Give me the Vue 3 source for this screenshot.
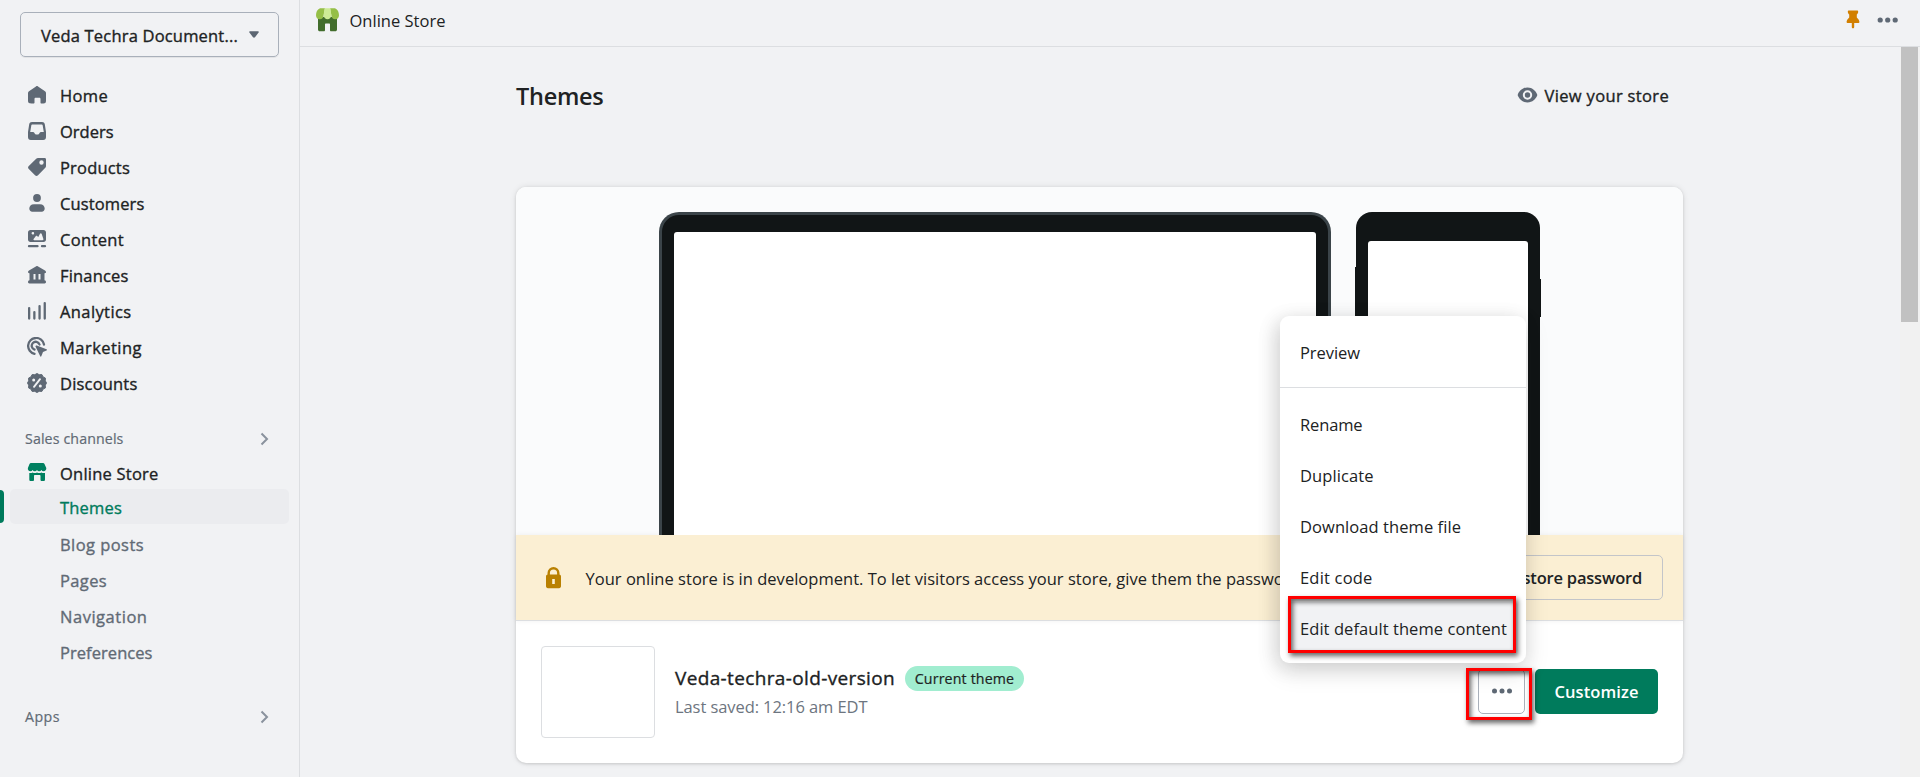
<script setup>
const nav = [
  { label: 'Home', icon: 'home', w: 47 },
  { label: 'Orders', icon: 'orders', w: 52.5 },
  { label: 'Products', icon: 'products', w: 69 },
  { label: 'Customers', icon: 'customers', w: 83.5 },
  { label: 'Content', icon: 'content', w: 63 },
  { label: 'Finances', icon: 'finances', w: 67.5 },
  { label: 'Analytics', icon: 'analytics', w: 70.5 },
  { label: 'Marketing', icon: 'marketing', w: 81 },
  { label: 'Discounts', icon: 'discounts', w: 76.5 },
]
const sub = [
  { label: 'Blog posts', w: 83 },
  { label: 'Pages', w: 46 },
  { label: 'Navigation', w: 86.5 },
  { label: 'Preferences', w: 91.5 },
]
const actions = [
  { label: 'Rename', w: 61.5 },
  { label: 'Duplicate', w: 72.5 },
  { label: 'Download theme file', w: 160 },
  { label: 'Edit code', w: 71.5 },
  { label: 'Edit default theme content', w: 206, active: true },
]

// Tracks a label so that it fills the given width.
const vFit = {
  mounted(el, { value }) {
    const extra = value + 1 - el.getBoundingClientRect().width
    el.style.letterSpacing = `${extra / el.textContent.trim().length}px`
  },
}
</script>

<template>
  <div class="app">
    <aside class="sidebar">
      <div class="picker">
        <span v-fit="196">Veda Techra Document...</span>
        <svg width="10" height="7" viewBox="0 0 10 7"><path d="M1 .3h8c.8 0 1.100.7.6 1.200L6 6.200c-.6.6-1.400.6-2 0L.4 1.500C-.1 1 .2.300 1 .3z" fill="#5c6672" /></svg>
      </div>

      <nav class="primary">
        <a v-for="n in nav" :key="n.label" class="row">
          <svg class="ico" viewBox="0 0 20 20" width="20" height="20" fill="#5f6975">
            <path v-if="n.icon === 'home'" d="M9 1.400c.6-.4 1.400-.4 2 0l7 4.900c.6.400 1 1 1 1.700V16c0 1.700-1 2.500-2.500 2.500h-2c-.7 0-1-.4-1-1V14c0-.8-.5-1.300-1.200-1.300H8.700c-.8 0-1.200.5-1.200 1.300v3.500c0 .6-.4 1-1 1h-2C2 18.500 1 17.700 1 16V8c0-.7.4-1.300 1-1.700z" />
            <path v-else-if="n.icon === 'orders'" fill-rule="evenodd" d="M5 1h10c1.500 0 2.500.8 2.800 2.200L19 11v5c0 1.800-1 3-2.800 3H3.800C2 19 1 17.800 1 16v-5l1.200-7.800C2.500 1.800 3.500 1 5 1zm.6 2.500c-.8 0-1.200.4-1.300 1L3.200 11H6c.6 0 1 .2 1.300.7L8 13c.2.300.5.500 1 .5h2c.5 0 .8-.2 1-.5l.7-1.300c.3-.5.7-.7 1.300-.7h2.800l-1.100-6.500c-.1-.6-.5-1-1.300-1z" />
            <path v-else-if="n.icon === 'products'" fill-rule="evenodd" d="M11 1h6.500c1 0 1.500.5 1.500 1.500V9c0 .7-.2 1.300-.7 1.800l-7.300 7.400c-1 1-2 1-3 0L1.800 12c-1-1-1-2 0-3l7.400-7.300C9.700 1.200 10.300 1 11 1zm3.500 6.700a2.200 2.200 0 1 0 0-4.400 2.200 2.200 0 0 0 0 4.400z" />
            <g v-else-if="n.icon === 'customers'"><circle cx="10" cy="5" r="3.900" /><path d="M7 11.200h6c3 0 4.700 2 4.700 4.300 0 2-1.200 3.200-3 3.200H5.300c-1.800 0-3-1.200-3-3.200 0-2.300 1.700-4.300 4.700-4.300z" /></g>
            <g v-else-if="n.icon === 'content'"><path fill-rule="evenodd" d="M3.500 1h13C18 1 19 2 19 3.500v7c0 1.500-1 2.500-2.500 2.500h-13C2 13 1 12 1 10.500v-7C1 2 2 1 3.500 1zM5.500 5.500A1.300 1.300 0 1 0 5.500 3a1.300 1.300 0 0 0 0 2.500zM7.300 11.200h8.200c.8 0 1.100-.6.9-1.200l-1.700-5c-.3-.9-1.200-.9-1.700-.2L11.300 8 10 7c-.5-.3-1-.2-1.300.3L6.600 10c-.4.600-.1 1.200.7 1.200z" /><path d="M2 16h8.500a1.100 1.100 0 0 1 0 2.300H2A1.100 1.100 0 0 1 2 16zm13 0h3a1.100 1.100 0 0 1 0 2.300h-3a1.100 1.100 0 0 1 0-2.300z" /></g>
            <path v-else-if="n.icon === 'finances'" fill-rule="evenodd" d="M9.300 1.200c.5-.3.900-.3 1.400 0L18 5.400c.7.400 1 .9 1 1.600 0 .8-.5 1.200-1.200 1.200H17.500v7c1 .2 1.500.8 1.500 1.800 0 .9-.5 1.400-1.400 1.400H2.400C1.500 18.400 1 17.900 1 17c0-1 .5-1.600 1.500-1.800v-7h-.3C1.500 8.200 1 7.800 1 7c0-.7.300-1.200 1-1.600zM6.500 9v5.500h2V9zm5 0v5.500h2V9z" />
            <g v-else-if="n.icon === 'analytics'"><rect x="1" y="6" width="2.300" height="12.700" rx="1.100" /><rect x="6.200" y="10" width="2.300" height="8.700" rx="1.100" /><rect x="11.400" y="4" width="2.300" height="14.700" rx="1.100" /><rect x="16.600" y="1" width="2.300" height="17.700" rx="1.100" /></g>
            <g v-else-if="n.icon === 'marketing'"><path fill="none" stroke="#5f6975" stroke-width="2.300" stroke-linecap="round" d="M17 7.500A8 8 0 1 0 7.500 16.800M12.500 7.500A4 4 0 1 0 7.500 12.600" /><path d="M8.800 8.800c.3-.3.600-.3 1-.2l9.700 3.600c.7.300.7 1 0 1.300l-3.500 1.600-1.600 4c-.3.700-1 .7-1.300 0L8.600 9.800c-.2-.4-.1-.7.200-1z" /></g>
            <g v-else><path d="M10 .5l2.200 1.200 2.700-.1 1.200 2.300 2.300 1.200-.1 2.700L19.500 10l-1.200 2.200.1 2.700-2.300 1.200-1.200 2.300-2.700-.1L10 19.500l-2.200-1.200-2.700.1-1.200-2.300-2.300-1.200.1-2.700L.5 10l1.200-2.200-.1-2.700 2.300-1.200 1.200-2.300 2.700.1z" stroke="#5f6975" stroke-linejoin="round" /><path d="M7 13.800l6-7.600" stroke="#f1f2f4" stroke-width="1.900" stroke-linecap="round" /><circle cx="6.700" cy="7" r="1.500" fill="#f1f2f4" /><circle cx="13.300" cy="13" r="1.500" fill="#f1f2f4" /></g>
          </svg>
          <span v-fit="n.w">{{ n.label }}</span>
        </a>
      </nav>

      <div class="section">
        <span v-fit="97.500">Sales channels</span>
        <svg width="9" height="14" viewBox="0 0 9 14"><path d="M1.500 1.500L7 7l-5.500 5.500" fill="none" stroke="#8a929d" stroke-width="2" /></svg>
      </div>
      <div class="row channel">
        <svg class="ico" viewBox="0 0 20 20" width="20" height="20" fill="#008060"><path d="M4 1h12c.7 0 1.200.3 1.500.9L19.300 6c.2 2-1 3.200-2.700 3.200-1 0-1.700-.4-2.200-1.200-.5.800-1.200 1.200-2.200 1.200S10.500 8.800 10 8c-.5.800-1.200 1.200-2.200 1.200S6.100 8.800 5.600 8c-.5.800-1.200 1.200-2.200 1.200C1.700 9.200.5 8 .9 6l1.600-4.100C2.800 1.300 3.300 1 4 1z" /><path d="M2.300 11c1.500.3 2.500 0 3.300-.6 1.300.9 3 .9 4.400 0 1.400.9 3.100.9 4.400 0 .8.600 2 .9 3.600.6v6.500c0 1-.6 1.500-1.500 1.500h-1.700c-.9 0-1.300-.5-1.300-1.300V14c0-.7-.3-1-1-1H8c-.7 0-1 .3-1 1v3.700c0 .8-.4 1.300-1.300 1.300H3.800c-.9 0-1.500-.5-1.500-1.500z" /></svg>
        <span v-fit="97.500">Online Store</span>
      </div>
      <div class="current"><i /><div><span v-fit="61">Themes</span></div></div>
      <div class="subnav">
        <a v-for="s in sub" :key="s.label"><span v-fit="s.w">{{ s.label }}</span></a>
      </div>
      <div class="section apps">
        <span v-fit="34">Apps</span>
        <svg width="9" height="14" viewBox="0 0 9 14"><path d="M1.500 1.500L7 7l-5.500 5.500" fill="none" stroke="#8a929d" stroke-width="2" /></svg>
      </div>
    </aside>

    <main>
      <header class="topbar">
        <svg width="23" height="24" viewBox="0 0 23 24"><path d="M2 9h19v12.500c0 1.200-.7 1.800-1.800 1.800h-4c-.9 0-1.200-.5-1.200-1.300v-5.500c0-.7-.3-1-1-1H10c-.7 0-1 .3-1 1V22c0 .8-.3 1.300-1.200 1.300h-4C2.700 23.300 2 22.700 2 21.500z" fill="#426d2c" /><path d="M4 .3h5L7.700 7c0 2.500-1.500 4.300-3.900 4.300S0 9.500 0 7.200C.2 4 1 1.900 4 .3zM14 .3h5c3 1.600 3.800 3.700 4 6.900 0 2.300-1.400 4.100-3.800 4.100S15.300 9.500 15.300 7z" fill="#95bf47" /><path d="M8.600.3h5.800l.9 6.700c0 2.500-1.600 4.300-3.800 4.300S7.700 9.500 7.700 7z" fill="#cdeb95" /></svg>
        <span class="title"><span v-fit="95">Online Store</span></span>
        <svg class="pin" width="14" height="19" viewBox="0 0 14 19"><path d="M3 .5h8c.8 0 1.200.5 1.200 1.200 0 1.300-.6 2-1.400 2.800v3C12.500 9 13.400 10.500 13.400 12c0 .6-.3.900-.9.900H8.200V17c0 .8-.4 1.300-1.200 1.300s-1.200-.5-1.200-1.300v-4.100H1.500c-.6 0-.9-.3-.9-.9C.6 10.500 1.500 9 3.200 7.500v-3C2.400 3.700 1.800 3 1.800 1.700 1.800 1 2.200.5 3 .5z" fill="#d27f00" /></svg>
        <svg width="22" height="6" viewBox="0 0 22 6" fill="#5f6975"><circle cx="3.200" cy="3" r="2.600" /><circle cx="10.700" cy="3" r="2.600" /><circle cx="18.200" cy="3" r="2.600" /></svg>
      </header>

      <div class="scroller">
        <div class="content">
          <div class="pagehead">
            <h1><span v-fit="86.500">Themes</span></h1>
            <a class="view">
              <svg width="21" height="16" viewBox="0 0 21 16"><path fill-rule="evenodd" d="M10.500.5c5 0 8.300 3.600 9.600 6.700.2.500.2 1.100 0 1.600-1.300 3.100-4.600 6.700-9.600 6.700S2.200 11.900.9 8.800a2 2 0 0 1 0-1.600C2.200 4.100 5.500.5 10.500.5zm0 12.200a4.700 4.700 0 1 0 0-9.400 4.700 4.700 0 0 0 0 9.400zm0-2a2.700 2.700 0 1 0 0-5.400 2.700 2.700 0 0 0 0 5.400z" fill="#5f6975" /></svg>
              <span v-fit="123.500">View your store</span>
            </a>
          </div>

          <section class="card">
            <div class="stage">
              <div class="laptop"><div /></div>
              <div class="phone"><div /><i class="lbtn" /><i class="rbtn" /></div>
            </div>
            <div class="banner">
              <svg width="15" height="22" viewBox="0 0 15 22"><path fill="none" stroke="#b98000" stroke-width="2.400" d="M2.700 9V6a4.800 4.800 0 0 1 9.600 0v3" /><path fill-rule="evenodd" d="M2 7.500h11c1.300 0 2 .7 2 2V19c0 1.400-.7 2.200-2 2.200H2C.7 21.200 0 20.400 0 19V9.500c0-1.300.7-2 2-2zM6.200 12v5h2.600v-5z" fill="#b98000" /></svg>
              <p><span v-fit="718.500">Your online store is in development. To let visitors access your store, give them the password.</span></p>
              <button class="pw"><span v-fit="150">See store password</span></button>
            </div>
            <div class="theme">
              <div class="thumb" />
              <div class="info">
                <div class="name"><span v-fit="219">Veda-techra-old-version</span><b><span v-fit="98.500">Current theme</span></b></div>
                <div class="saved"><span v-fit="191.500">Last saved: 12:16 am EDT</span></div>
              </div>
              <button class="more"><svg width="22" height="6" viewBox="0 0 22 6" fill="#5f6975"><circle cx="3.500" cy="3" r="2.500" /><circle cx="11" cy="3" r="2.500" /><circle cx="18.500" cy="3" r="2.500" /></svg></button>
              <button class="cta"><span v-fit="83">Customize</span></button>
            </div>

            <div class="menu">
              <div class="first"><span v-fit="59">Preview</span></div>
              <ul>
                <li v-for="a in actions" :key="a.label" :class="{ active: a.active }"><span v-fit="a.w">{{ a.label }}</span></li>
              </ul>
            </div>
            <i class="mark mark-item" />
            <i class="mark mark-more" />
          </section>
        </div>
        <div class="track"><div class="thumbbar" /></div>
      </div>
    </main>
  </div>
</template>

<style>
body { margin: 0; overflow: hidden; background: #f1f2f4; }
</style>

<style scoped>
* { box-sizing: border-box; }
.app { display: flex; width: 1920px; height: 777px; overflow: hidden; background: #f1f2f4; color: #202223; font-family: "Open Sans", "Noto Sans", sans-serif; font-size: 16.5px; line-height: 24px; }
span { white-space: nowrap; }
svg { display: block; flex: none; }
.sidebar { width: 300px; flex: none; border-right: 1px solid #dcdee1; }
.sidebar, .view, .name { -webkit-text-stroke: 0.35px currentColor; }
.picker { display: flex; align-items: center; justify-content: space-between; margin: 12px 0 0 20px; width: 259px; height: 45px; padding: 2px 19.500px 0 20px; border: 1px solid #a9b0ba; border-radius: 5px; box-shadow: 0 1px 0 rgba(0,0,0,.06); }
.picker svg { margin-top: -2px; }
.primary { margin-top: 20px; }
.row { display: flex; align-items: center; height: 36px; padding: 2px 0 0 27px; gap: 13px; }
.ico { margin-top: -3px; width: 20px; }
.section { display: flex; align-items: center; justify-content: space-between; height: 24px; margin-top: 26px; padding: 0 30px 0 25px; font-size: 14.200px; color: #616a75; -webkit-text-stroke-width: 0.2px; }
.section svg { margin-top: -1px; }
.channel { height: 35px; margin-top: 3px; padding-top: 4px; }
.current { display: flex; align-items: center; height: 35px; color: #007b5c; }
.current i { width: 4px; height: 33px; background: #007b5c; border-radius: 0 4px 4px 0; }
.current div { margin-left: 6px; width: 279px; height: 35px; padding: 7px 0 0 50px; border-radius: 5px; background: #ebecef; }
.subnav { margin-top: 2px; color: #616a75; }
.subnav a { display: flex; align-items: center; height: 36px; padding: 1px 0 0 60px; }
.apps { margin-top: 35px; }
main { flex: 1; min-width: 0; display: flex; flex-direction: column; }
.topbar { height: 47px; flex: none; display: flex; align-items: center; border-bottom: 1px solid #dcdee1; padding: 0 21px 7px 16px; }
.topbar .title { margin: 3px 0 0 10.500px; flex: 1; }
.pin { margin-right: 17px; }
.scroller { flex: 1; min-height: 0; display: flex; }
.content { width: 1383px; padding-left: 216px; flex: none; }
.pagehead { height: 140px; padding: 32px 14px 0 0; display: flex; justify-content: space-between; align-items: flex-start; }
h1 { margin: 0; font-size: 23.500px; line-height: 34px; font-weight: 600; }
.view { display: flex; align-items: center; gap: 7px; height: 34px; }
.view svg { margin-top: -3px; }
.card { position: relative; width: 1167px; height: 576px; background: #fff; border-radius: 10px; box-shadow: 0 0 6px rgba(23,24,24,.1), 0 1px 3px rgba(0,0,0,.12); }
.stage { height: 348px; padding: 25px 0 0 143px; display: flex; gap: 25px; background: #fafbfc; border-radius: 10px 10px 0 0; overflow: hidden; }
.laptop { width: 672px; padding: 17px 12px 0; background: #111516; border: 3px solid #3b4449; border-bottom: 0; border-radius: 20px 20px 0 0; }
.laptop div { height: 100%; background: #fff; border-radius: 3px 3px 0 0; }
.phone { position: relative; width: 184px; padding: 29px 12px 0; background: #111516; border-radius: 16px 16px 0 0; }
.phone div { height: 100%; background: #fff; border-radius: 3px 3px 0 0; }
.phone i { position: absolute; width: 1px; background: #111516; }
.lbtn { left: -1px; top: 55px; height: 66px; }
.rbtn { right: -1px; top: 67px; height: 38px; }
.banner { display: flex; align-items: center; height: 86px; padding: 0 20px 0 30px; background: #fbefd3; border-bottom: 1px solid #dcdee1; box-shadow: 0 0 5px rgba(23,24,24,.06); }
.banner p { margin: 2px 0 0 24.500px; flex: 1; min-width: 0; }
button { font: inherit; color: inherit; background: none; border: 0; padding: 0; display: flex; align-items: center; justify-content: center; flex: none; }
.pw { height: 45px; padding: 0 20px; border: 1px solid #c3c5c9; border-radius: 5px; font-weight: 600; }
.theme { display: flex; align-items: center; height: 142px; padding: 0 25px; }
.thumb { width: 114px; height: 92px; border: 1px solid #dcdee1; border-radius: 4px; }
.info { margin: -2px 0 0 20px; flex: 1; }
.name { display: flex; align-items: center; height: 28px; font-size: 19px; }
.name b { margin: 1px 0 0 10px; width: 119px; height: 25px; border-radius: 13px; background: #a1edd0; font-size: 14.200px; font-weight: 400; line-height: 26px; text-align: center; -webkit-text-stroke-width: 0.2px; }
.saved { margin-top: 3px; color: #6d7580; }
.more { width: 47px; height: 45px; margin: -2px 10px 0 0; border: 1px solid #a9b0ba; border-radius: 5px; }
.cta { width: 123px; height: 45px; margin-top: -2px; border-radius: 5px; background: #007b5c; color: #fff; font-weight: 600; padding-top: 2px; }
.menu { position: absolute; left: 764px; top: 129px; width: 246px; height: 347px; background: #fff; border-radius: 9px; box-shadow: -4px 4px 20px -1px rgba(23,24,24,.13), 0 8px 24px rgba(23,24,24,.13); overflow: hidden; }
.first { height: 72px; padding: 25px 20px 0; border-bottom: 1px solid #dcdee1; }
ul { margin: 0; padding: 10px 8px; list-style: none; }
li { height: 51px; padding: 15px 12px 0; border-radius: 4px; }
li.active { background: #f1f2f4; }
.mark { position: absolute; border: 3px solid #f00; box-shadow: 2px 3px 5px rgba(0,0,0,.6), inset 2px 3px 5px rgba(0,0,0,.6); }
.mark-item { left: 772px; top: 409px; width: 228px; height: 57px; }
.mark-more { left: 950px; top: 481px; width: 66px; height: 52px; }
.track { margin-left: auto; width: 20px; padding-left: 1px; background: #f1f1f1; }
.thumbbar { width: 17px; height: 275px; background: #c1c1c1; }
</style>
